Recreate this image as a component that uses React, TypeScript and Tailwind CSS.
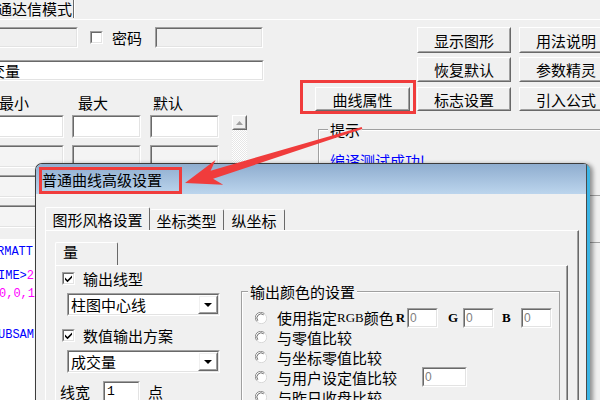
import React from "react";

type P = { className?: string; inner?: string; children?: React.ReactNode };

function Sunken({ className = "", inner = "", children }: P) {
  return (
    <div className={"shrink-0 border border-t-[#a0a0a0] border-l-[#a0a0a0] border-b-white border-r-white " + className}>
      <div className={"h-full w-full border border-t-[#696969] border-l-[#696969] border-b-[#e3e3e3] border-r-[#e3e3e3] " + inner}>
        {children}
      </div>
    </div>
  );
}

function Raised({ className = "", inner = "", children }: P) {
  return (
    <div className={"shrink-0 border border-t-white border-l-white border-b-[#696969] border-r-[#696969] " + className}>
      <div className={"h-full w-full border border-t-[#f0f0f0] border-l-[#f0f0f0] border-b-[#a0a0a0] border-r-[#a0a0a0] " + inner}>
        {children}
      </div>
    </div>
  );
}

function Btn({ className = "", children }: P) {
  return (
    <Raised className={className} inner="flex items-center justify-center text-[15px] leading-none whitespace-nowrap">
      {children}
    </Raised>
  );
}

function Check({ checked = false, className = "" }: { checked?: boolean; className?: string }) {
  return (
    <Sunken className={"w-[13px] h-[13px] " + className} inner="bg-white relative">
      {checked && (
        <svg className="absolute left-0 top-0" width="9" height="9" viewBox="0 0 9 9">
          <path d="M1 3.5 L3.5 6 L8 1.5 L8 3.8 L3.5 8.3 L1 5.8 Z" fill="#000" />
        </svg>
      )}
    </Sunken>
  );
}

function Radio() {
  return (
    <svg width="12" height="12" viewBox="0 0 12 12" className="shrink-0">
      <circle cx="6" cy="6" r="5.5" fill="#ffffff" />
      <path d="M1.9 9.6 A5.3 5.3 0 0 1 9.6 1.9" stroke="#8c8c8c" strokeWidth="1" fill="none" />
      <path d="M2.8 8.7 A4.2 4.2 0 0 1 8.7 2.8" stroke="#6e6e6e" strokeWidth="1" fill="none" />
      <path d="M10.1 2.4 A5.3 5.3 0 0 1 2.4 10.1" stroke="#d8d8d8" strokeWidth="1" fill="none" />
    </svg>
  );
}

function Combo({ text, className = "" }: { text: string; className?: string }) {
  return (
    <Sunken className={"h-[23px] w-[153px] " + className} inner="bg-white flex items-center">
      <span className="flex-1 pl-[2px] text-[15px] leading-none whitespace-nowrap">{text}</span>
      <Raised className="w-[20px] h-full" inner="flex items-center justify-center">
        <svg width="8" height="4" viewBox="0 0 8 4">
          <path d="M0 0 H8 L4 4 Z" fill="#000" />
        </svg>
      </Raised>
    </Sunken>
  );
}

function Num({ className = "" }: { className?: string }) {
  return (
    <Sunken
      className={"h-[20px] " + className}
      inner="bg-white flex items-center pl-[1px] text-[12px] text-[#808080] font-['Liberation_Sans',sans-serif] leading-none"
    >
      0
    </Sunken>
  );
}

function Arrow() {
  const T = [185, 183];
  const E = [362, 128];
  const dx = E[0] - T[0];
  const dy = E[1] - T[1];
  const len = Math.hypot(dx, dy);
  const ux = dx / len;
  const uy = dy / len;
  const nx = -uy;
  const ny = ux;
  const pt = (d: number, w: number) =>
    `${(T[0] + ux * d + nx * w).toFixed(1)},${(T[1] + uy * d + ny * w).toFixed(1)}`;
  const H = 36;
  const W = 13;
  const pts = [pt(0, 0), pt(H, W), pt(H * 0.78, 4.2), pt(len, 1.1), pt(len, -1.1), pt(H * 0.78, -4.2), pt(H, -W)].join(" ");
  return (
    <svg className="absolute left-0 top-0 pointer-events-none" width="600" height="400" viewBox="0 0 600 400">
      <polygon points={pts} fill="#f03c3c" />
    </svg>
  );
}

export default function App() {
  const inputRows = [0, 1, 2, 3];
  return (
    <div className="relative w-[600px] h-[400px] overflow-hidden bg-[#f0f0f0] text-black font-['Noto_Sans_CJK_SC','Noto_Sans',sans-serif]">
      {/* top tab header */}
      <div className="flex h-[20px] border-b border-b-white">
        <div className="ml-[-3px] w-[76px] shrink-0 text-[15px] leading-[18px] whitespace-nowrap">通达信模式</div>
        <div className="w-[2px] h-[18px] border-l border-l-[#696969] border-r border-r-white" />
      </div>

      <div className="flex">
        {/* left column */}
        <div className="w-[300px] shrink-0 pt-[7px]">
          <div className="flex items-center h-[21px]">
            <Sunken className="ml-[-5px] w-[83px] h-[21px]" />
            <Check className="ml-[12px]" />
            <span className="ml-[9px] text-[15px] leading-[17px] whitespace-nowrap">密码</span>
            <Sunken className="ml-[13px] w-[108px] h-[21px]" />
          </div>
          <Sunken className="mt-[12px] ml-[-5px] w-[269px] h-[21px]" inner="bg-white overflow-hidden flex items-center">
            <span className="ml-[-22px] text-[15px] leading-[17px] whitespace-nowrap">成交量</span>
          </Sunken>
          <div className="mt-[13px] flex h-[17px] text-[15px] leading-[17px] whitespace-nowrap">
            <span className="ml-[-1px] w-[79px] shrink-0">最小</span>
            <span className="w-[75px] shrink-0">最大</span>
            <span>默认</span>
          </div>
          <div className="mt-[4px] flex">
            <div className="flex flex-col gap-[7px]">
              {inputRows.map((i) => (
                <div key={i} className="flex">
                  <Sunken className="ml-[-2px] w-[66px] h-[23px]" inner={i === 0 ? "bg-white" : "bg-[#f4f4f4]"} />
                  <Sunken className="ml-[8px] w-[69px] h-[23px]" inner={i === 0 ? "bg-white" : "bg-[#f4f4f4]"} />
                  <Sunken className="ml-[9px] w-[69px] h-[23px]" inner={i === 0 ? "bg-white" : "bg-[#f4f4f4]"} />
                </div>
              ))}
            </div>
            <div className="ml-[13px] w-[15px] flex flex-col">
              <Raised className="w-[15px] h-[15px]" inner="flex items-center justify-center">
                <svg width="7" height="4" viewBox="0 0 7 4">
                  <path d="M0 4 H7 L3.5 0 Z" fill="#a0a0a0" />
                </svg>
              </Raised>
              <div className="h-[100px] bg-[repeating-conic-gradient(#ffffff_0%_25%,#e6e6e6_0%_50%)] bg-size-[2px_2px]" />
            </div>
          </div>
          <div className="mt-[9px] h-[170px] bg-white font-['Liberation_Mono',monospace] text-[12px] leading-[14px] whitespace-nowrap">
            <div className="pt-[6px] ml-[-3px] text-[#0000ff]">RMATT</div>
            <div className="mt-[10px] ml-[-2px] text-[#0000ff]">
              IME&gt;<span className="text-[#ff00ff]">2</span>
            </div>
            <div className="mt-[4px] ml-[-1px] text-[#ff00ff]">0,0,1</div>
            <div className="mt-[27px] ml-[-2px] text-[#0000ff]">UBSAM</div>
          </div>
        </div>

        {/* right column */}
        <div className="w-[300px] shrink-0 pt-[7px]">
          <div className="flex ml-[117px] gap-[8px]">
            <Btn className="w-[94px] h-[26px]">显示图形</Btn>
            <Btn className="w-[94px] h-[26px]">用法说明</Btn>
          </div>
          <div className="flex ml-[117px] gap-[8px] mt-[4px]">
            <Btn className="w-[94px] h-[25px]">恢复默认</Btn>
            <Btn className="w-[94px] h-[25px]">参数精灵</Btn>
          </div>
          <div className="flex mt-[5px]">
            <Btn className="ml-[15px] w-[95px] h-[24px]">曲线属性</Btn>
            <Btn className="ml-[7px] w-[94px] h-[24px]">标志设置</Btn>
            <Btn className="ml-[8px] w-[94px] h-[24px]">引入公式</Btn>
          </div>
          <fieldset className="mt-[10px] ml-[18px] w-[300px] h-[75px] border border-[#a0a0a0] shadow-[inset_1px_1px_0_#ffffff]">
            <legend className="ml-[9px] px-[2px] bg-[#f0f0f0] text-[15px] leading-[17px]">提示</legend>
            <div className="mt-[14px] pl-[11px] text-[15px] leading-[17px] text-[#0000ff] whitespace-nowrap">编译测试成功!</div>
          </fieldset>
          <div className="mt-[46px] ml-[18px] h-[60px] border-t border-[#a0a0a0]" />
        </div>
      </div>

      {/* dialog */}
      <div className="absolute left-[35px] top-[163px] w-[555px] h-[250px] flex rounded-t-[7px] border-l border-t border-[#3c3c3c] bg-[#f0f0f0] shadow-[3px_1px_4px_rgba(0,0,0,0.4)] overflow-hidden">
        <div className="w-[550px] shrink-0 flex flex-col">
          <div className="h-[30px] shrink-0 flex items-center pl-[6px] bg-linear-to-b from-[#8fadcf] to-[#bcd5ed] text-[15px] leading-none whitespace-nowrap">
            普通曲线高级设置
          </div>
          <div className="flex-1 pt-[13px] pl-[9px]">
            {/* tabs */}
            <div className="flex items-end h-[23px] text-[15px] leading-none whitespace-nowrap">
              <div className="h-[23px] w-[105px] flex items-center justify-center border-t border-l border-t-white border-l-white border-r border-r-[#696969] rounded-t-[2px]">
                图形风格设置
              </div>
              <div className="h-[21px] w-[74px] flex items-center justify-center border-t border-t-white border-r border-r-[#696969] rounded-t-[2px]">
                坐标类型
              </div>
              <div className="h-[21px] w-[61px] flex items-center justify-center border-t border-t-white border-r border-r-[#696969] rounded-t-[2px]">
                纵坐标
              </div>
            </div>
            {/* panel */}
            <div className="w-[534px] h-[200px] border-t border-l border-t-white border-l-white border-r border-r-[#696969] shadow-[inset_-1px_0_0_#a0a0a0] pt-[11px] pl-[9px]">
              <div className="h-[23px] w-[63px] border-t border-l border-t-white border-l-white border-r border-r-[#696969] rounded-t-[2px] pl-[7px] text-[15px] leading-[17px]">
                量
              </div>
              <div className="w-[513px] h-[160px] border-t border-l border-t-white border-l-white border-r border-r-[#696969] shadow-[inset_-1px_0_0_#a0a0a0] flex">
                {/* left controls */}
                <div className="w-[185px] shrink-0 flex flex-col">
                  <div className="mt-[5px] ml-[6px] h-[15px] flex items-center">
                    <Check checked />
                    <span className="ml-[8px] text-[15px] leading-none whitespace-nowrap">输出线型</span>
                  </div>
                  <Combo className="mt-[7px] ml-[11px]" text="柱图中心线" />
                  <div className="mt-[12px] ml-[6px] h-[15px] flex items-center">
                    <Check checked />
                    <span className="ml-[8px] text-[15px] leading-none whitespace-nowrap">数值输出方案</span>
                  </div>
                  <Combo className="mt-[7px] ml-[11px]" text="成交量" />
                  <div className="mt-[8px] ml-[4px] h-[21px] flex items-center">
                    <span className="text-[15px] leading-none whitespace-nowrap">线宽</span>
                    <Sunken className="ml-[13px] w-[37px] h-[21px]" inner="bg-white flex items-center pl-[2px] text-[13px] font-['Liberation_Mono',monospace] leading-none">
                      1
                    </Sunken>
                    <span className="ml-[8px] text-[15px] leading-none">点</span>
                  </div>
                </div>
                {/* colour group */}
                <fieldset className="self-start mt-[17px] w-[319px] h-[140px] border border-[#a0a0a0] shadow-[inset_1px_1px_0_#ffffff]">
                  <legend className="ml-[6px] px-[2px] bg-[#f0f0f0] text-[15px] leading-[17px] whitespace-nowrap">输出颜色的设置</legend>
                  <div className="mt-[8px] pl-[13px] flex flex-col text-[15px] leading-none whitespace-nowrap">
                    <div className="h-[19px] flex items-center">
                      <Radio />
                      <span className="ml-[10px] w-[130px] shrink-0 flex items-center">
                        使用指定
                        <span className="font-['Liberation_Serif',serif] text-[13px]">RGB</span>
                        颜色
                        <span className="ml-[2px] font-['Liberation_Serif',serif] font-bold text-[13px]">R</span>
                      </span>
                      <Num className="w-[31px]" />
                      <span className="ml-[10px] w-[15px] shrink-0 font-['Liberation_Serif',serif] font-bold text-[13px]">G</span>
                      <Num className="w-[31px]" />
                      <span className="ml-[8px] w-[19px] shrink-0 font-['Liberation_Serif',serif] font-bold text-[13px]">B</span>
                      <Num className="w-[31px]" />
                    </div>
                    <div className="h-[20px] flex items-center">
                      <Radio />
                      <span className="ml-[10px]">与零值比较</span>
                    </div>
                    <div className="h-[20px] flex items-center">
                      <Radio />
                      <span className="ml-[10px]">与坐标零值比较</span>
                    </div>
                    <div className="h-[20px] flex items-center">
                      <Radio />
                      <span className="ml-[10px] w-[145px] shrink-0">与用户设定值比较</span>
                      <Num className="w-[45px] h-[19px]" />
                    </div>
                    <div className="h-[20px] flex items-center">
                      <Radio />
                      <span className="ml-[10px]">与昨日收盘比较</span>
                    </div>
                  </div>
                </fieldset>
              </div>
            </div>
          </div>
        </div>
        <div className="w-[4px] shrink-0 border-l border-l-[#4a4a4a] bg-[#3cb4e4]" />
      </div>

      {/* annotations */}
      <div className="absolute left-[300px] top-[80px] w-[116px] h-[34px] border-[3px] border-[#f03c3c]" />
      <div className="absolute left-[39px] top-[167px] w-[143px] h-[27px] border-[3px] border-[#f03c3c]" />
      <Arrow />
    </div>
  );
}
